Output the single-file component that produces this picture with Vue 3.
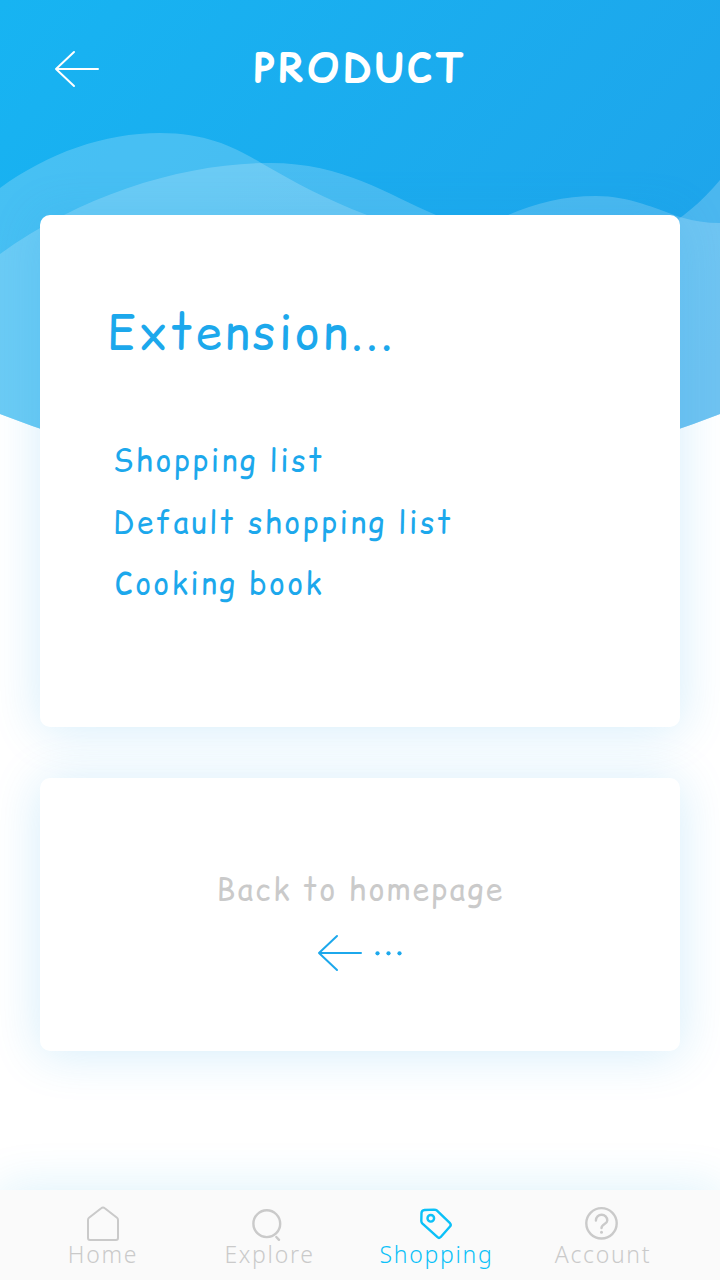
<script setup>
const links = [
  { text: 'Shopping list', cls: 'l1' },
  { text: 'Default shopping list', cls: 'l2' },
  { text: 'Cooking book', cls: 'l3' },
]
</script>

<template>
  <div class="screen">
    <svg class="waves" viewBox="0 0 720 480" aria-hidden="true">
      <defs>
        <linearGradient id="sky" gradientUnits="userSpaceOnUse" x1="0" y1="0" x2="600" y2="500">
          <stop offset="0" stop-color="#17b4f2" />
          <stop offset="1" stop-color="#1fa3ea" />
        </linearGradient>
        <clipPath id="dome"><path d="M0 0H720V414Q540 484 360 484Q180 484 0 414Z" /></clipPath>
      </defs>
      <g clip-path="url(#dome)">
        <rect width="720" height="480" fill="url(#sky)" />
        <path d="M0 188C48 153 104 133 160 133C208 133 236 148 262 163.500C294 182 325 199 367 215C390 226 410 234 440 244C550 274 650 264 720 180V480H0Z" fill="#fff" fill-opacity=".2" />
        <path d="M0 254C84 193 186 163 270 163C344 163 388 195 436 215C462 224 484 224 508 215C536 203 564 196 596 196C630 196 656 209 680 217Q700 223 720 223V480H0Z" fill="#fff" fill-opacity=".2" />
      </g>
    </svg>

    <header class="top">
      <svg class="arrow" viewBox="0 0 46 38"><path d="M20 2L2 19L20 36M2 19H44" /></svg>
      <h1>PRODUCT</h1>
    </header>

    <main class="content">
      <section class="card extension">
        <h2>Extension...</h2>
        <ul>
          <li v-for="link in links" :key="link.text" :class="link.cls">{{ link.text }}</li>
        </ul>
      </section>
      <section class="card back">
        <p>Back to homepage</p>
        <svg class="back-arrow" viewBox="0 0 90 38">
          <path d="M20 2L2 19L20 36M2 19H44" />
          <g><circle cx="60.5" cy="19.300" r="2.1" /><circle cx="71.5" cy="19.300" r="2.1" /><circle cx="82.5" cy="19.300" r="2.1" /></g>
        </svg>
      </section>
    </main>

    <nav class="nav">
      <a class="home">
        <svg viewBox="0 0 40 40"><path d="M5 15Q5 13.600 6 12.800L18.200 3.200Q20 1.700 21.800 3.200L34 12.800Q35 13.600 35 15V33Q35 35 33 35H7Q5 35 5 33Z" /></svg>
        <span>Home</span>
      </a>
      <a class="explore">
        <svg viewBox="0 0 40 40"><circle cx="16.800" cy="18.700" r="13.400" /><path d="M26.300 32L29 34.800" /></svg>
        <span>Explore</span>
      </a>
      <a class="shopping">
        <svg viewBox="0 0 40 40"><path d="M7.500 5L17 4.600Q18.800 4.600 20.300 5.800L33 18.200Q34.500 19.900 33 21.500L23.500 32.200Q22 33.600 20.500 32.200L5.500 18.700Q4.400 17.600 4.300 16L4.500 8Q4.700 5.300 7.500 5Z" /><circle cx="13.800" cy="13.300" r="3.300" /></svg>
        <span>Shopping</span>
      </a>
      <a class="account">
        <svg viewBox="0 0 40 40"><circle cx="18.500" cy="18.300" r="15.200" /><path d="M12.900 15.500A5.700 5.700 0 0 1 24.300 15.500C24.300 19 18.500 19 18.500 23" /><circle class="dot" cx="18.500" cy="27.300" r="1.500" /></svg>
        <span>Account</span>
      </a>
    </nav>
  </div>
</template>

<style>
body { margin: 0; }
</style>

<style scoped>
.screen {
  position: relative;
  width: 720px;
  height: 1280px;
  overflow: hidden;
  background: #fff;
  display: flex;
  flex-direction: column;
  font-family: "Comic Sans MS", "Comic Relief", "Comic Neue", Lato, sans-serif;
}
h1, h2, p, ul { margin: 0; padding: 0; font-weight: 400; }
li { list-style: none; }
h1, h2, p, li { white-space: nowrap; }
.waves { position: absolute; top: 0; left: 0; width: 720px; height: 480px; }
.top {
  position: relative;
  height: 215px;
  box-sizing: border-box;
  padding: 38px 0 0 54px;
  display: flex;
  align-items: flex-start;
}
.arrow { width: 46px; height: 38px; margin-top: 12px; }
.arrow path, .back-arrow path {
  fill: none;
  stroke: #fff;
  stroke-width: 2;
  stroke-linecap: round;
  stroke-linejoin: round;
}
h1 {
  margin-left: 154px;
  font-size: 40px;
  line-height: 60px;
  font-weight: 700;
  color: #fff;
  letter-spacing: 3.2px;
}
.content { position: relative; display: flex; flex-direction: column; gap: 51px; padding: 0 40px; }
.card {
  box-sizing: border-box;
  background: #fff;
  border-radius: 10px;
  box-shadow: 0 3px 48px rgba(29, 160, 232, .19);
}
.extension { height: 512px; padding: 82px 67px 0; color: #1ca8ec; }
h2 { font-size: 47px; line-height: 70px; letter-spacing: 3.2px; }
ul { margin: 64px 0 0 6px; }
li { height: 61.5px; line-height: 60px; font-size: 29.5px; letter-spacing: 2.65px; }
.l3 { padding-left: 2px; }
.back { height: 273px; padding-top: 86px; display: flex; flex-direction: column; align-items: center; }
.back p { font-size: 30px; line-height: 50px; letter-spacing: 2.35px; color: #cacaca; padding-left: 1px; }
.back-arrow { width: 90px; height: 38px; margin: 20px 0 0 3px; }
.back-arrow path { stroke: #1ca8ec; }
.back-arrow g { fill: #1ca8ec; }
.nav {
  position: relative;
  margin-top: auto;
  height: 90px;
  background: #fafafa;
  box-shadow: 0 -2px 48px rgba(20, 170, 225, .15);
  font-family: "Noto Sans", sans-serif;
  font-weight: 350;
  display: grid;
  grid-template-columns: 186px 167px 167px 166px;
}
.nav a { display: flex; flex-direction: column; align-items: center; color: #cacaca; padding-top: 15px; }
.nav a.home { padding-left: 20px; }
.nav svg { width: 40px; height: 40px; fill: none; stroke: currentColor; stroke-width: 2.4; stroke-linecap: round; stroke-linejoin: round; overflow: visible; }
.nav .dot { fill: currentColor; stroke: none; }
.nav a.home svg { stroke-width: 2; }
.nav a.shopping { color: #0bc1f8; }
.nav span { font-size: 23px; line-height: 26px; margin-top: -4px; letter-spacing: 1.7px; }
</style>
